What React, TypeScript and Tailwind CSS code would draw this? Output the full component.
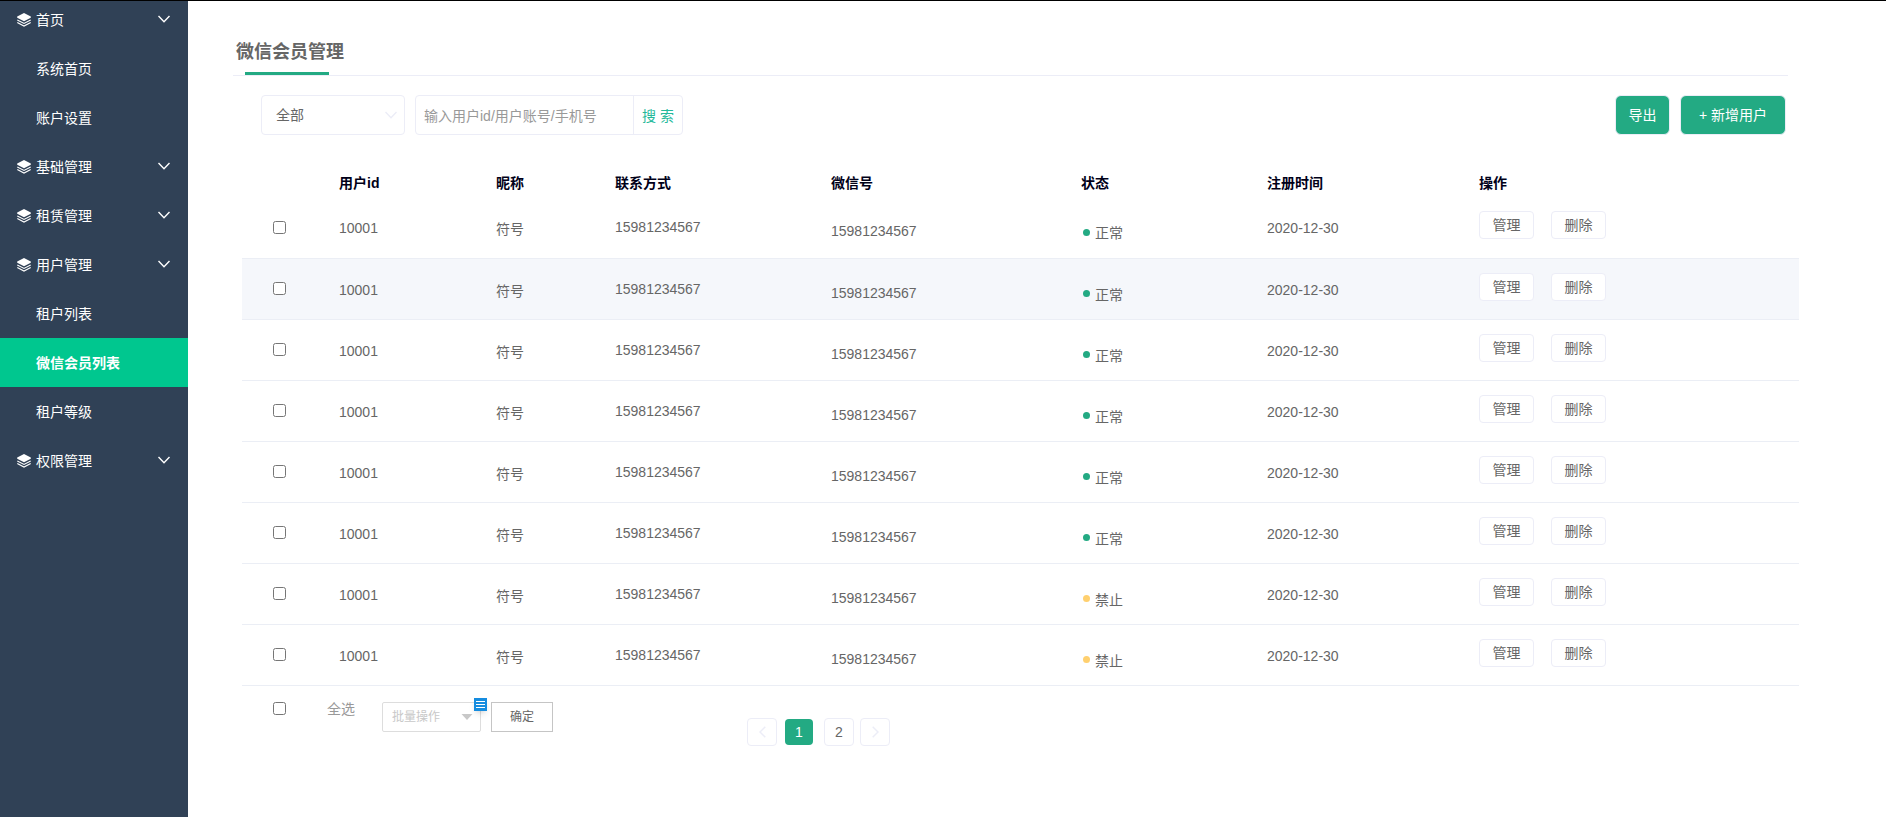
const menu = [
  { label: '首页', children: ['系统首页', '账户设置'] },
  { label: '基础管理', children: [] },
  { label: '租赁管理', children: [] },
  { label: '用户管理', children: ['租户列表', '微信会员列表', '租户等级'] },
  { label: '权限管理', children: [] },
];

const activeItem = '微信会员列表';

const users = ['正常', '正常', '正常', '正常', '正常', '正常', '禁止', '禁止'].map((status, i) => ({
  key: i + 1,
  id: '10001',
  name: '符号',
  phone: '15981234567',
  wechat: '15981234567',
  status,
  date: '2020-12-30',
}));

function LayersIcon() {
  return (
    <svg className="w-[14px] h-[14px] shrink-0" viewBox="0 0 14 14" fill="none" aria-hidden="true">
      <path d="M7 0 L13.8 3.4 V4.8 L7 8.2 L0.2 4.8 V3.4 Z" fill="#fff" />
      <path d="M0.3 6.9 L7 10.4 L13.7 6.9" stroke="#fff" strokeWidth="1.1" />
      <path d="M0.3 9.6 L7 13.1 L13.7 9.6" stroke="#fff" strokeWidth="1.1" />
    </svg>
  );
}

function ArrowDown({ className }: { className: string }) {
  return (
    <svg className={className} viewBox="0 0 12 8" fill="none" stroke="currentColor" aria-hidden="true">
      <path d="M0.5 1 L6 6.8 L11.5 1" strokeWidth="1.4" />
    </svg>
  );
}

function Sidebar() {
  return (
    <aside className="w-[188px] shrink-0 bg-[#304156] text-white overflow-hidden">
      <ul className="-mt-1.5">
        {menu.map((group) => (
          <li key={group.label}>
            <button type="button" className="w-full h-[49px] pl-[17px] pr-[18px] flex items-center gap-[5px]">
              <LayersIcon />
              <span>{group.label}</span>
              <ArrowDown className="ml-auto mb-0.5 w-3 h-2" />
            </button>
            <ul>
              {group.children.map((item) => (
                <li key={item}>
                  <a
                    href="#"
                    className={
                      item === activeItem
                        ? 'h-[49px] pl-9 flex items-center bg-[#00c78f] font-bold'
                        : 'h-[49px] pl-9 flex items-center'
                    }
                  >
                    {item}
                  </a>
                </li>
              ))}
            </ul>
          </li>
        ))}
      </ul>
    </aside>
  );
}

function Toolbar() {
  return (
    <div className="flex items-center ml-7 mr-0.5 mt-[19px]">
      <div className="relative w-36">
        <select
          aria-label="用户类型"
          className="appearance-none w-full h-10 pl-[14px] border border-[#ecedf7] rounded bg-white text-[#666]"
        >
          <option>全部</option>
        </select>
        <ArrowDown className="absolute right-2 top-4 w-3 h-2 text-[#ecedf7] pointer-events-none" />
      </div>
      <form className="flex w-[268px] h-10 ml-[10px] border border-[#ecedf7] rounded">
        <input
          type="text"
          aria-label="搜索用户"
          placeholder="输入用户id/用户账号/手机号"
          className="flex-1 min-w-0 pl-2 pt-0.5 outline-none placeholder:text-[#999]"
        />
        <button type="button" className="w-[49px] pt-0.5 border-l border-[#ecedf7] text-[#23b99a]">
          搜 索
        </button>
      </form>
      <button type="button" className="ml-auto w-[55px] h-10 bg-[#23aa83] border border-[#ecedf7] rounded-md text-white">
        导出
      </button>
      <button type="button" className="ml-[10px] w-[106px] h-10 bg-[#23aa83] border border-[#ecedf7] rounded-md text-white">
        + 新增用户
      </button>
    </div>
  );
}

function UserTable() {
  return (
    <table className="w-[calc(100%+2px)] ml-[9px] mt-[29px] table-fixed text-left">
      <colgroup>
        <col className="w-[97px]" />
        <col className="w-[157px]" />
        <col className="w-[119px]" />
        <col className="w-[216px]" />
        <col className="w-[250px]" />
        <col className="w-[186px]" />
        <col className="w-[212px]" />
        <col />
      </colgroup>
      <thead className="text-[#000018]">
        <tr className="h-[33px] *:pt-1">
          <th></th>
          <th>用户id</th>
          <th>昵称</th>
          <th>联系方式</th>
          <th>微信号</th>
          <th>状态</th>
          <th>注册时间</th>
          <th>操作</th>
        </tr>
      </thead>
      <tbody>
        {users.map((user) => (
          <tr key={user.key} className="h-[61px] border-b border-[#ebeef5] nth-2:bg-[#f5f7fb]">
            <td className="pl-[31px]">
              <input type="checkbox" aria-label={`选择用户${user.key}`} className="block w-[13px] h-[13px]" />
            </td>
            <td className="pt-0.5">{user.id}</td>
            <td className="pt-1">{user.name}</td>
            <td>{user.phone}</td>
            <td className="pt-2">{user.wechat}</td>
            <td className="pt-3">
              <span className="flex items-center gap-[5px] pl-0.5">
                <span
                  className={
                    user.status === '正常'
                      ? 'w-[7px] h-[7px] mb-0.5 rounded-full bg-[#23aa83]'
                      : 'w-[7px] h-[7px] mb-0.5 rounded-full bg-[#ffd06f]'
                  }
                />
                {user.status}
              </span>
            </td>
            <td className="pt-0.5">{user.date}</td>
            <td className="pb-1">
              <div className="flex gap-[17px]">
                <button type="button" className="w-[55px] h-7 border border-[#ecedf7] rounded bg-white">
                  管理
                </button>
                <button type="button" className="w-[55px] h-7 border border-[#ecedf7] rounded bg-white">
                  删除
                </button>
              </div>
            </td>
          </tr>
        ))}
      </tbody>
    </table>
  );
}

function Pagination() {
  return (
    <nav className="flex items-center ml-[194px] mt-4" aria-label="分页">
      <button
        type="button"
        aria-label="上一页"
        className="w-[30px] h-7 flex items-center justify-center border border-[#ecedf7] rounded text-[#ecedf7]"
      >
        <svg className="w-[7px] h-3" viewBox="0 0 7 12" fill="none" stroke="currentColor" aria-hidden="true">
          <path d="M6.3 0.7 L1 6 L6.3 11.3" strokeWidth="1.5" />
        </svg>
      </button>
      <button type="button" className="w-7 h-[26px] ml-2 rounded bg-[#23aa83] text-white">
        1
      </button>
      <button type="button" className="w-[30px] h-7 ml-[11px] border border-[#ecedf7] rounded">
        2
      </button>
      <button
        type="button"
        aria-label="下一页"
        className="w-[30px] h-7 ml-[6px] flex items-center justify-center border border-[#ecedf7] rounded text-[#ecedf7]"
      >
        <svg className="w-[7px] h-3" viewBox="0 0 7 12" fill="none" stroke="currentColor" aria-hidden="true">
          <path d="M0.7 0.7 L6 6 L0.7 11.3" strokeWidth="1.5" />
        </svg>
      </button>
    </nav>
  );
}

function TableFooter() {
  return (
    <div className="flex items-start ml-10 pt-[13px]">
      <label className="flex items-center gap-[41px] text-[#999]">
        <input type="checkbox" className="w-[13px] h-[13px]" />
        全选
      </label>
      <div className="flex items-start ml-[27px] pt-[3px]">
        <div className="relative w-[99px]">
          <select
            aria-label="批量操作"
            className="appearance-none w-full h-[30px] pl-[9px] border border-[#ddd] rounded-xs bg-white text-xs text-[#c8c8c8]"
          >
            <option>批量操作</option>
          </select>
          <svg className="absolute right-2 top-3 w-3 h-[7px] pointer-events-none" viewBox="0 0 12 7" aria-hidden="true">
            <path d="M0.5 0 H11.5 L6 6 Z" fill="#c8c8c8" />
          </svg>
          <svg className="absolute -right-[6px] -top-1 w-[13px] h-[13px] shadow-md" viewBox="0 0 13 13" aria-hidden="true">
            <path d="M0 0 H13 V13 H0 Z" fill="#158cdf" />
            <path d="M2 3.5 H11 M2 6.5 H11 M2 9.5 H11" stroke="#fff" />
          </svg>
        </div>
        <button type="button" className="w-[62px] h-[30px] ml-[10px] border border-[#c5c5c5] text-xs">
          确定
        </button>
        <Pagination />
      </div>
    </div>
  );
}

export default function App() {
  return (
    <div className="flex min-h-screen border-t border-black bg-white font-['Liberation_Sans','Noto_Sans_CJK_SC',sans-serif] text-sm text-[#666]">
      <Sidebar />
      <main className="flex-1 min-w-0 pl-[45px] pr-[98px] pt-[37px]">
        <header className="border-b border-[#ecedf7]">
          <h1 className="pl-[3px] text-lg leading-7 font-bold">微信会员管理</h1>
          <div className="w-[84px] h-[3px] ml-3 mt-[6px] bg-[#23aa83]" />
        </header>
        <Toolbar />
        <UserTable />
        <TableFooter />
      </main>
    </div>
  );
}
